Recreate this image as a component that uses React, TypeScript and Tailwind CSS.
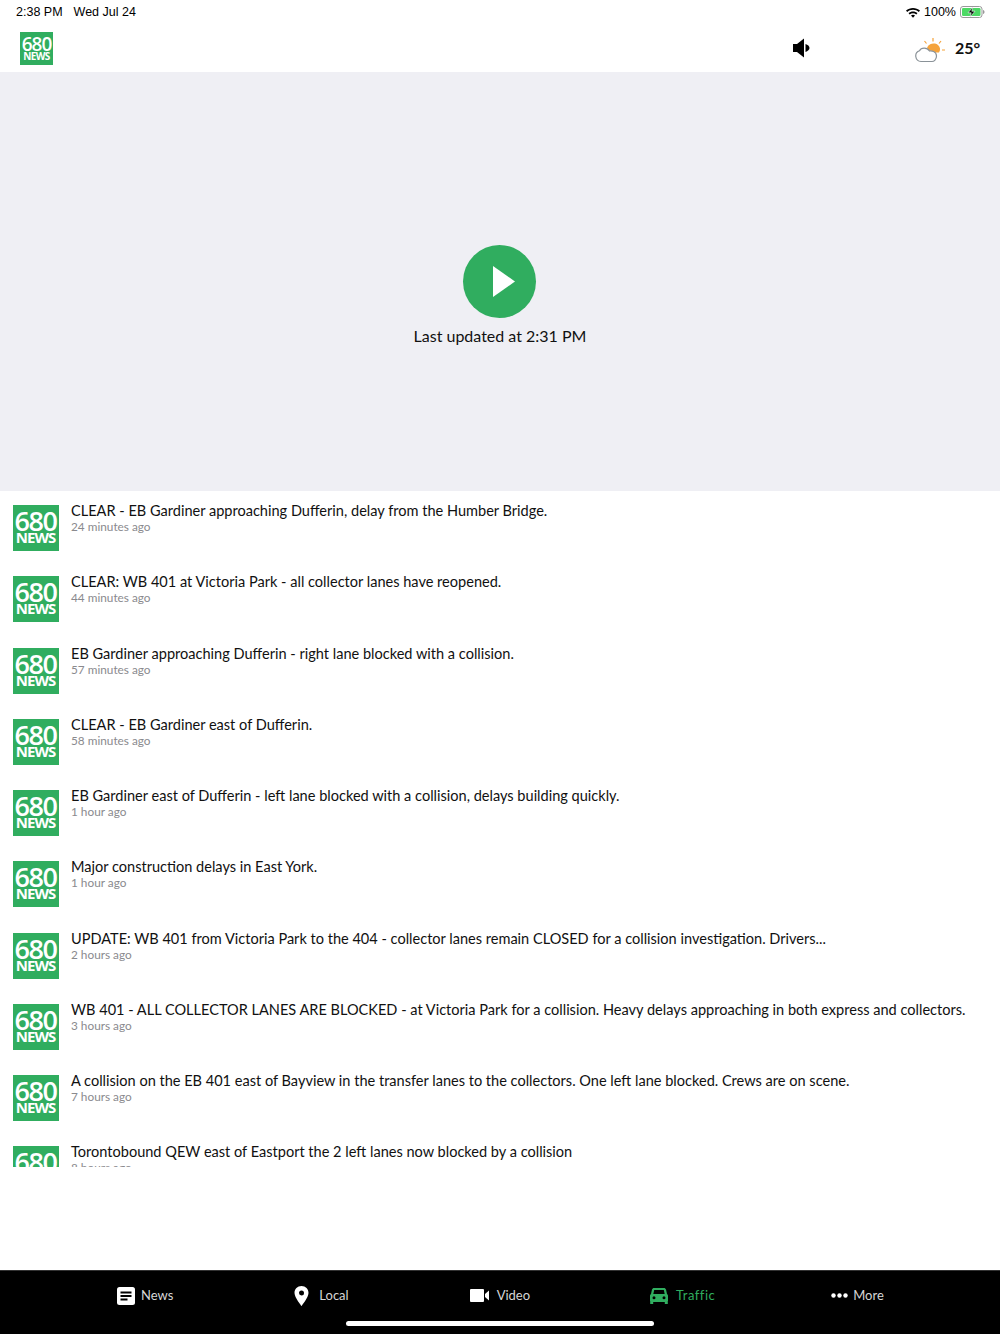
import React from 'react'

const items = [
  { title: 'CLEAR - EB Gardiner approaching Dufferin, delay from the Humber Bridge.', time: '24 minutes ago' },
  { title: 'CLEAR: WB 401 at Victoria Park - all collector lanes have reopened.', time: '44 minutes ago' },
  { title: 'EB Gardiner approaching Dufferin - right lane blocked with a collision.', time: '57 minutes ago' },
  { title: 'CLEAR - EB Gardiner east of Dufferin.', time: '58 minutes ago' },
  { title: 'EB Gardiner east of Dufferin - left lane blocked with a collision, delays building quickly.', time: '1 hour ago' },
  { title: 'Major construction delays in East York.', time: '1 hour ago' },
  { title: 'UPDATE: WB 401 from Victoria Park to the 404 - collector lanes remain CLOSED for a collision investigation. Drivers...', time: '2 hours ago' },
  { title: 'WB 401 - ALL COLLECTOR LANES ARE BLOCKED - at Victoria Park for a collision. Heavy delays approaching in both express and collectors.', time: '3 hours ago' },
  { title: 'A collision on the EB 401 east of Bayview in the transfer lanes to the collectors. One left lane blocked. Crews are on scene.', time: '7 hours ago' },
  { title: 'Torontobound QEW east of Eastport the 2 left lanes now blocked by a collision', time: '8 hours ago' },
]

function Logo({ big }: { big?: boolean }) {
  if (big) {
    return (
      <div className="w-[46px] h-[46px] shrink-0 bg-[#30ad5f] flex flex-col items-center overflow-hidden text-white font-['Open_Sans',sans-serif] font-semibold">
        <div className="text-[27px] leading-[20px] mt-[6px] mr-[1px] tracking-[-1.5px]">680</div>
        <div className="text-[15px] leading-[13px] mr-[1px] font-bold tracking-[-1px]">NEWS</div>
      </div>
    )
  }
  return (
    <div className="w-[33px] h-[33px] shrink-0 bg-[#30ad5f] flex flex-col items-center overflow-hidden text-white font-['Open_Sans',sans-serif] font-semibold">
      <div className="text-[19px] leading-[15px] mt-[5px] tracking-[-1px]">680</div>
      <div className="text-[10px] leading-[9px] font-bold tracking-[-0.6px]">NEWS</div>
    </div>
  )
}

function Tab({ icon, label, active, className }: { icon: React.ReactNode; label: string; active?: boolean; className: string }) {
  return (
    <div className={`flex items-center ${className}`}>
      {icon}
      <span className={`text-[13px] ${active ? 'text-[#30ad5f] tracking-[0.5px]' : 'text-[#d6d6d6]'}`}>{label}</span>
    </div>
  )
}

export default function App() {
  return (
    <div className="w-[1000px] h-[1334px] bg-white flex flex-col overflow-hidden font-['Lato',sans-serif] text-[#111]">
      {/* status bar */}
      <div className="h-[24px] flex items-center justify-between pl-[16px] pr-[15px] font-['Liberation_Sans',sans-serif] text-[12.5px] text-black">
        <div className="flex gap-[11px]">
          <span>2:38 PM</span>
          <span>Wed Jul 24</span>
        </div>
        <div className="flex items-center gap-[4px]">
          <svg width="14" height="11" viewBox="0 0 14 11">
            <path d="M0 3.6C3.8 0 10.2 0 14 3.6l-1.2 1.3C9.6 2 4.4 2 1.2 4.9z" fill="#000" />
            <path d="M2.5 6.1c2.5-2.3 6.5-2.3 9 0l-1.2 1.3c-1.900-1.600-4.700-1.600-6.600 0z" fill="#000" />
            <path d="M5 8.6c1.100-1 2.900-1 4 0L7 10.800z" fill="#000" />
          </svg>
          <span>100%</span>
          <svg width="25" height="12" viewBox="0 0 25 12">
            <rect x="0.5" y="0.5" width="21.500" height="11" rx="2.500" fill="none" stroke="#999" />
            <rect x="2" y="2" width="18.500" height="8" rx="1.200" fill="#4cd964" />
            <path d="M23 4v4c1-.3 1.500-1 1.500-2S24 4.300 23 4z" fill="#999" />
            <path d="M13 1 8 6.800h3.200L10 11l5-5.800h-3.200z" fill="#000" stroke="#fff" strokeWidth="0.6" />
          </svg>
        </div>
      </div>

      {/* header */}
      <div className="h-[48px] flex items-center pl-[20px]">
        <Logo />
        <svg className="ml-[740px]" width="18" height="20" viewBox="0 0 18 20">
          <path d="M0 6h4l7-5.500v19L4 14H0z" fill="#000" />
          <path d="M12.500 6c2.300.8 4 2.200 4 4s-1.700 3.200-4 4z" fill="#000" />
        </svg>
        <svg className="ml-[104px] mt-[3px]" width="30" height="26" viewBox="0 0 30 26">
          <path d="M12 11a7 7 0 0 1 11-3 6 6 0 0 1 1 7.500h-8z" fill="#f5a33b" />
          <path d="M18 1v3.500M9.500 4l2 2.500M26 4l-2 2.500M27 13h3.500" stroke="#f5a33b" strokeWidth="1.200" fill="none" />
          <path d="M6 24.500a5.500 5.500 0 0 1-1.500-10.700C6 10.500 12 10 14.500 14c1.500-.5 7 0 7 5 0 3.500-2.500 5.500-4.500 5.500z" fill="#fff" stroke="#8a9298" strokeWidth="1.200" />
        </svg>
        <span className="ml-[10px] text-[16px] font-bold text-[#111]">25°</span>
      </div>

      {/* player */}
      <div className="h-[419px] bg-[#efeff4] flex flex-col items-center pt-[173px]">
        <div className="w-[73px] h-[73px] mr-[1px] rounded-full bg-[#30ad5f] flex items-center justify-center">
          <svg className="ml-[9px]" width="22" height="31" viewBox="0 0 22 31">
            <path d="M0 0 22 15.500 0 31z" fill="#fff" />
          </svg>
        </div>
        <div className="mt-[8px] text-[16px] leading-[20px] text-[#111]">Last updated at 2:31 PM</div>
      </div>

      {/* list */}
      <div className="h-[676px] overflow-hidden">
        {items.map((item) => (
          <div key={item.title} className="h-[71.25px] flex pl-[13px] pt-[14px]">
            <Logo big />
            <div className="ml-[12px] -mt-[4px]">
              <div className="text-[14.55px] leading-[19px] whitespace-nowrap text-[#111]">{item.title}</div>
              <div className="text-[11.8px] leading-[14px] text-[#8a8a8e]">{item.time}</div>
            </div>
          </div>
        ))}
      </div>

      <div className="flex-1" />

      {/* tab bar */}
      <div className="h-[64px] bg-black relative border-t border-[#333]">
        <div className="flex h-[49px] items-center">
          <Tab
            className="ml-[117px] gap-[6px]"
            label="News"
            icon={
              <svg width="18" height="18" viewBox="0 0 18 18">
                <rect width="18" height="18" rx="2.500" fill="#fff" />
                <path d="M3.500 4.500h11v2h-11zM3.500 8h11v2h-11zM3.500 11.500h7v2h-7z" fill="#000" />
              </svg>
            }
          />
          <Tab
            className="ml-[121px] gap-[10px]"
            label="Local"
            icon={
              <svg width="15" height="20" viewBox="0 0 15 20">
                <path fillRule="evenodd" d="M7.500 0C3.400 0 .5 3 .5 7c0 4.500 7 13 7 13s7-8.500 7-13c0-4-2.900-7-7-7zm0 4.500a2.500 2.500 0 1 1 0 5 2.500 2.500 0 0 1 0-5z" fill="#fff" />
              </svg>
            }
          />
          <Tab
            className="ml-[121px] gap-[8px]"
            label="Video"
            icon={
              <svg width="19" height="13" viewBox="0 0 19 13">
                <rect width="14" height="13" rx="1" fill="#fff" />
                <path d="m15 5 4-3.500v10L15 8z" fill="#fff" />
              </svg>
            }
          />
          <Tab
            className="ml-[120px] gap-[8px]"
            label="Traffic"
            active
            icon={
              <svg width="18" height="16" viewBox="0 0 18 16">
                <path fillRule="evenodd" d="M4 0h10c1 0 1.600.6 2 1.500L17 6c.7.500 1 1 1 2v5h-.2v3h-3v-2H3.200v2h-3v-3H0V8c0-1 .3-1.500 1-2l1-4.500C2.400.6 3 0 4 0zm.2 2L3.300 6h11.400l-.9-4zM4 8.200a1.500 1.500 0 1 0 0 3 1.500 1.500 0 0 0 0-3zm10 0a1.500 1.500 0 1 0 0 3 1.500 1.500 0 0 0 0-3z" fill="#30ad5f" />
              </svg>
            }
          />
          <Tab
            className="ml-[116px] gap-[5px]"
            label="More"
            icon={
              <svg width="17" height="5" viewBox="0 0 17 5">
                <circle cx="2.500" cy="2.500" r="2.200" fill="#fff" />
                <circle cx="8.500" cy="2.500" r="2.200" fill="#fff" />
                <circle cx="14.500" cy="2.500" r="2.200" fill="#fff" />
              </svg>
            }
          />
        </div>
        <div className="absolute left-[346px] bottom-[8px] w-[308px] h-[5px] rounded-full bg-white" />
      </div>
    </div>
  )
}
